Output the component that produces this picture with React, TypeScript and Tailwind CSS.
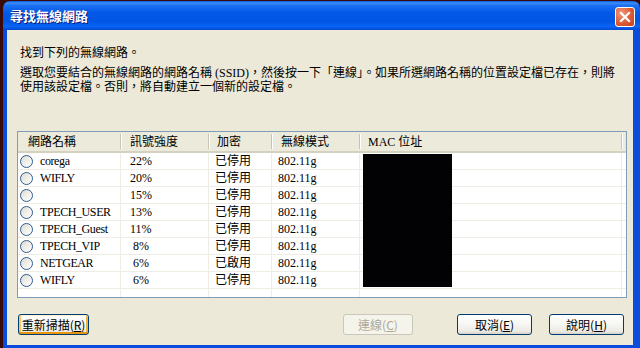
import type { ReactNode } from 'react';

type Network = { name: string; signal: string; enc: string; mode: string };

const networks: Network[] = [
  { name: 'corega', signal: '22%', enc: '已停用', mode: '802.11g' },
  { name: 'WIFLY', signal: '20%', enc: '已停用', mode: '802.11g' },
  { name: '', signal: '15%', enc: '已停用', mode: '802.11g' },
  { name: 'TPECH_USER', signal: '13%', enc: '已停用', mode: '802.11g' },
  { name: 'TPECH_Guest', signal: '11%', enc: '已停用', mode: '802.11g' },
  { name: 'TPECH_VIP', signal: '\u00a08%', enc: '已停用', mode: '802.11g' },
  { name: 'NETGEAR', signal: '\u00a06%', enc: '已啟用', mode: '802.11g' },
  { name: 'WIFLY', signal: '\u00a06%', enc: '已停用', mode: '802.11g' },
];

// header cell with the little XP separator at the right edge
function HeadCell({ children, className }: { children: ReactNode; className: string }) {
  return (
    <div className={`flex items-center justify-between ${className}`}>
      <span className="whitespace-nowrap">{children}</span>
      <span className="h-[15px] w-[1px] bg-[#C7C4B4] shadow-[1px_0_0_#FFFFFF]" />
    </div>
  );
}

function Radio() {
  return (
    <span className="ml-[2px] h-[13px] w-[13px] shrink-0 rounded-full border border-[#2F5C8F] bg-[linear-gradient(135deg,#D9D7CF_0%,#EEEDE8_45%,#FFFFFF_100%)]" />
  );
}

function XpButton({
  children,
  className = '',
  disabled = false,
  focused = false,
}: {
  children: ReactNode;
  className?: string;
  disabled?: boolean;
  focused?: boolean;
}) {
  const look = disabled
    ? 'border-[#C9C7BA] bg-[#F5F4EA] text-[#ACA899]'
    : focused
      ? 'border-[#003C74] bg-[linear-gradient(180deg,#FFFFFF_0%,#F6F6F2_50%,#ECEBE6_85%,#D8D2C6_100%)] shadow-[inset_0_1px_0_#FFF0CF,inset_0_-2px_0_#E5970E,inset_2px_0_0_#FBC761,inset_-2px_0_0_#F7B431]'
      : 'border-[#003C74] bg-[linear-gradient(180deg,#FFFFFF_0%,#F6F6F2_50%,#ECEBE6_85%,#D6D0C5_100%)]';
  return (
    <div className={`flex h-[21px] items-center justify-center rounded-[3px] border text-[12px] leading-none ${look} ${className}`}>
      {children}
    </div>
  );
}

export default function App() {
  return (
    <div className="h-[348px] w-[640px] overflow-hidden bg-[#3A0A0A] pl-[3px] pt-[1px] font-['Liberation_Serif','Noto_Sans_CJK_TC',serif] text-[12px] text-black">
      <div className="flex h-full flex-col">
        {/* title bar */}
        <div className="flex h-[29px] shrink-0 items-center rounded-t-[7px] bg-[linear-gradient(180deg,#0A5DDD_0%,#3B8CF7_7%,#1C6FF2_16%,#0358E7_40%,#0055E5_70%,#0A64F5_88%,#0048D0_100%)] pl-[7px] pr-[5px]">
          <span className="font-['Noto_Sans_CJK_TC',sans-serif] text-[13px] font-bold leading-none text-white [text-shadow:1px_1px_0_#0A1A80]">
            尋找無線網路
          </span>
          <div className="ml-auto mt-[2px] flex h-[20px] w-[20px] items-center justify-center rounded-[3px] border border-white bg-[radial-gradient(circle_at_30%_30%,#EE9A7E_0%,#DC5A34_55%,#C2401C_100%)]">
            <svg width="12" height="12" viewBox="0 0 12 12">
              <path d="M2 2L10 10M10 2L2 10" stroke="#FFFFFF" strokeWidth="2.2" strokeLinecap="square" />
            </svg>
          </div>
        </div>

        {/* body */}
        <div className="flex flex-1 flex-col border-b-[3px] border-l-[4px] border-r-[7px] border-[#0A4CDB] bg-[#ECE9D8]">
          <div className="mt-[15px] pl-[13px] font-['Noto_Sans_CJK_TC',sans-serif] leading-[14px]">找到下列的無線網路。</div>
          <div className="mt-[7px] pl-[13px] leading-[14px]">
            <div className="whitespace-nowrap">
              選取您要結合的無線網路的網路名稱 (SSID)，然後按一下「連線」。如果所選網路名稱的位置設定檔已存在，則將
            </div>
            <div className="whitespace-nowrap">使用該設定檔。否則，將自動建立一個新的設定檔。</div>
          </div>

          {/* network list */}
          <div className="relative ml-[10px] mt-[37px] flex h-[167px] w-[610px] flex-col border border-[#7F9DB9] bg-white">
            <div className="flex h-[21px] shrink-0 border-b-2 border-[#D5D1C0] bg-[#EBEADB] leading-none">
              <HeadCell className="w-[103px] pl-[10px]">網路名稱</HeadCell>
              <HeadCell className="w-[88px] pl-[9px]">訊號強度</HeadCell>
              <HeadCell className="w-[63px] pl-[8px]">加密</HeadCell>
              <HeadCell className="w-[88px] pl-[9px]">無線模式</HeadCell>
              <HeadCell className="w-[262px] pl-[8px]">MAC 位址</HeadCell>
            </div>

            {networks.map((n, i) => (
              <div key={i} className="flex h-[17px] shrink-0 border-b border-[#EFECE4] leading-none">
                <div className="flex w-[103px] items-center gap-[7px] border-r border-[#EFECE4]">
                  <Radio />
                  <span className="whitespace-nowrap tracking-[-0.4px]">{n.name}</span>
                </div>
                <div className="flex w-[88px] items-center whitespace-pre border-r border-[#EFECE4] pl-[9px]">{n.signal}</div>
                <div className="flex w-[63px] items-center border-r border-[#EFECE4] pl-[6px]">{n.enc}</div>
                <div className="flex w-[88px] items-center border-r border-[#EFECE4] pl-[6px]">{n.mode}</div>
                <div className="w-[262px] border-r border-[#EFECE4]" />
              </div>
            ))}
            <div className="flex flex-1">
              <div className="w-[103px] border-r border-[#EFECE4]" />
              <div className="w-[88px] border-r border-[#EFECE4]" />
              <div className="w-[63px] border-r border-[#EFECE4]" />
              <div className="w-[88px] border-r border-[#EFECE4]" />
              <div className="w-[262px] border-r border-[#EFECE4]" />
            </div>

            {/* redacted MAC addresses */}
            <div className="absolute left-[345px] top-[22px] h-[133px] w-[89px] bg-[#020104]" />
          </div>

          {/* buttons */}
          <div className="mt-[16px] flex pl-[11px] pr-[9px] font-['Noto_Sans_CJK_TC',sans-serif]">
            <XpButton focused className="w-[71px]">
              重新掃描(<u>R</u>)
            </XpButton>
            <XpButton disabled className="ml-auto w-[70px]">
              連線(<u>C</u>)
            </XpButton>
            <XpButton className="ml-[44px] w-[75px]">
              取消(<u>E</u>)
            </XpButton>
            <XpButton className="ml-[17px] w-[75px]">
              說明(<u>H</u>)
            </XpButton>
          </div>
        </div>
      </div>
    </div>
  );
}
